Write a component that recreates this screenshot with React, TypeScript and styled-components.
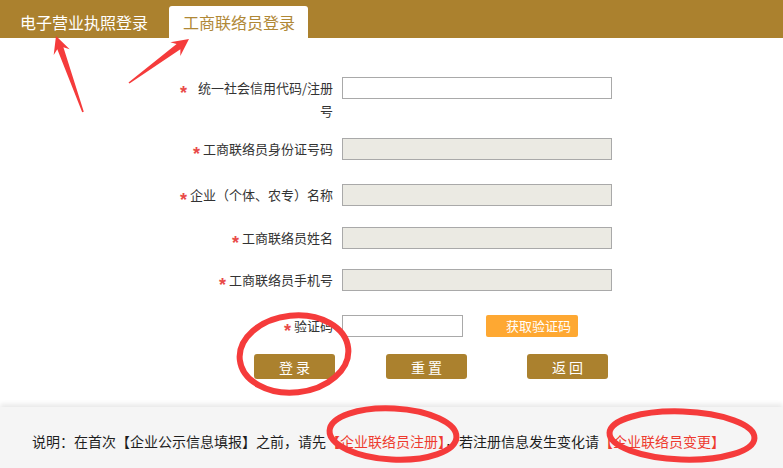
import React from "react";
import styled, { createGlobalStyle } from "styled-components";

const GlobalStyle = createGlobalStyle`
  html, body { margin: 0; padding: 0; background: #fff; overflow: hidden; }
  * { box-sizing: border-box; }
`;

const GOLD = "#AB812E";
const FONT = `"Noto Sans CJK SC", "Microsoft YaHei", "Noto Sans", sans-serif`;

const Page = styled.div`
  position: relative;
  width: 783px;
  height: 468px;
  display: flex;
  flex-direction: column;
  font-family: ${FONT};
  background: #fff;
  overflow: hidden;
`;

const Header = styled.div`
  height: 38px;
  flex-shrink: 0;
  background: ${GOLD};
  display: flex;
  align-items: flex-end;
`;

const Tab = styled.div<{ $active?: boolean }>`
  height: 32px;
  display: flex;
  align-items: center;
  padding: ${(p) => (p.$active ? "0 13px 0 14px" : "0 21px 0 20px")};
  font-size: 16px;
  color: ${(p) => (p.$active ? "#B08836" : "#fff")};
  background: ${(p) => (p.$active ? "#fff" : "transparent")};
  border-radius: 3px 3px 0 0;
  white-space: nowrap;
`;

const Form = styled.div`
  flex: 1;
  padding: 39px 0 0 175px;
  display: flex;
  flex-direction: column;
`;

const Row = styled.div<{ $mt: number }>`
  display: flex;
  align-items: flex-start;
  margin-top: ${(p) => p.$mt}px;
`;

const Label = styled.label`
  width: 158px;
  flex-shrink: 0;
  margin-right: 9px;
  text-align: right;
  font-size: 13px;
  line-height: 22px;
  color: #333;
`;

const Star = styled.span<{ $gap: number }>`
  display: inline-block;
  color: #e94a48;
  font-family: "Liberation Sans", Arial, sans-serif;
  font-weight: bold;
  font-size: 18px;
  line-height: 14px;
  vertical-align: -6px;
  margin-right: ${(p) => p.$gap}px;
`;

const Field = styled.input<{ $w: number; $grey?: boolean }>`
  width: ${(p) => p.$w}px;
  height: 22px;
  border: 1px solid #a9a9a9;
  background: ${(p) => (p.$grey ? "#EBEAE3" : "#fff")};
  margin: 0;
  padding: 0 4px;
  outline: none;
  font-family: ${FONT};
  font-size: 13px;
`;

const CodeButton = styled.button`
  margin-left: 23px;
  width: 92px;
  height: 22px;
  border: none;
  border-radius: 2px;
  background: #fea832;
  color: #fff;
  font-family: ${FONT};
  font-size: 13px;
  line-height: 22px;
  padding: 0 0 0 20px;
  text-align: left;
`;

const ButtonRow = styled.div`
  display: flex;
  margin-top: 16px;
  padding-left: 79px;
`;

const ActionButton = styled.button<{ $ml: number }>`
  width: 81px;
  height: 25px;
  margin-left: ${(p) => p.$ml}px;
  border: none;
  border-radius: 3px;
  background: ${GOLD};
  color: #fff;
  font-family: ${FONT};
  font-size: 14px;
  letter-spacing: 3px;
  padding: 0 0 0 3px;
`;

const Footer = styled.div`
  height: 61px;
  flex-shrink: 0;
  background: #f5f5f5;
  box-shadow: 0 -3px 5px rgba(0, 0, 0, 0.09);
  padding: 24px 0 0 32px;
  font-size: 14px;
  line-height: 20px;
  color: #1e1e1e;
  white-space: nowrap;
`;

const RedLink = styled.a`
  color: #ee3b2f;
  text-decoration: none;
`;

const Overlay = styled.svg`
  position: absolute;
  left: 0;
  top: 0;
  pointer-events: none;
`;

function arrowPoints(x1: number, y1: number, x2: number, y2: number): string {
  const dx = x2 - x1;
  const dy = y2 - y1;
  const len = Math.hypot(dx, dy);
  const ux = dx / len;
  const uy = dy / len;
  const nx = -uy;
  const ny = ux;
  const headLen = 17;
  const headHalf = 8.5;
  const notchBack = 13;
  const notchHalf = 3.2;
  const tailHalf = 0.8;
  const p = (a: number, b: number) =>
    `${(x1 + ux * a + nx * b).toFixed(1)},${(y1 + uy * a + ny * b).toFixed(1)}`;
  return [
    p(len, 0),
    p(len - headLen, headHalf),
    p(len - notchBack, notchHalf),
    p(0, tailHalf),
    p(0, -tailHalf),
    p(len - notchBack, -notchHalf),
    p(len - headLen, -headHalf),
  ].join(" ");
}

const RED = "#F53B3B";

const rows = [
  { label: "统一社会信用代码/注册号", gap: 11, grey: false, mt: 0 },
  { label: "工商联络员身份证号码", gap: 3, grey: true, mt: 16 },
  { label: "企业（个体、农专）名称", gap: 3, grey: true, mt: 23 },
  { label: "工商联络员姓名", gap: 3, grey: true, mt: 20 },
  { label: "工商联络员手机号", gap: 3, grey: true, mt: 19 },
];

export default function App() {
  return (
    <Page>
      <GlobalStyle />
      <Header>
        <Tab>电子营业执照登录</Tab>
        <Tab $active>工商联络员登录</Tab>
      </Header>
      <Form>
        {rows.map((r) => (
          <Row key={r.label} $mt={r.mt}>
            <Label>
              <Star $gap={r.gap}>*</Star>
              {r.label}
            </Label>
            <Field $w={270} $grey={r.grey} readOnly={r.grey} />
          </Row>
        ))}
        <Row $mt={23}>
          <Label>
            <Star $gap={3}>*</Star>
            验证码
          </Label>
          <Field $w={121} />
          <CodeButton>获取验证码</CodeButton>
        </Row>
        <ButtonRow>
          <ActionButton $ml={0}>登录</ActionButton>
          <ActionButton $ml={51}>重置</ActionButton>
          <ActionButton $ml={60}>返回</ActionButton>
        </ButtonRow>
      </Form>
      <Footer>
        说明：在首次【企业公示信息填报】之前，请先
        <RedLink>【企业联络员注册】</RedLink>
        ，若注册信息发生变化请
        <RedLink>【企业联络员变更】</RedLink>
      </Footer>
      <Overlay width={783} height={468} viewBox="0 0 783 468">
        <polygon points={arrowPoints(83, 112, 56, 36)} fill={RED} />
        <polygon points={arrowPoints(129, 83, 189, 39)} fill={RED} />
        <ellipse cx={294} cy={354} rx={54.5} ry={38.5} fill="none" stroke={RED} strokeWidth={6} transform="rotate(-6 294 354)" />
        <ellipse cx={393} cy={434} rx={63.5} ry={25.5} fill="none" stroke={RED} strokeWidth={6} transform="rotate(3 393 434)" />
        <ellipse cx={682} cy={435.5} rx={72.5} ry={24} fill="none" stroke={RED} strokeWidth={6} transform="rotate(2 682 435.5)" />
      </Overlay>
    </Page>
  );
}
